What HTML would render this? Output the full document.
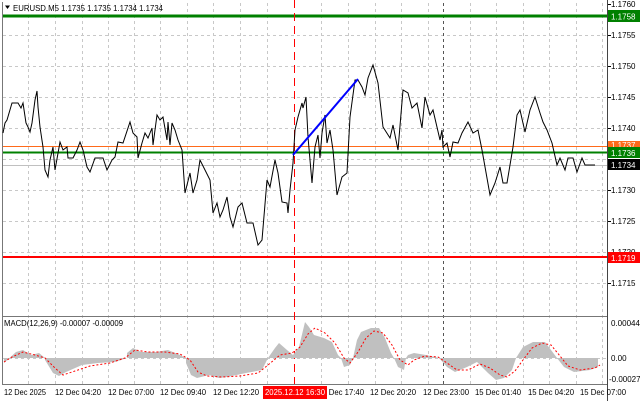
<!DOCTYPE html>
<html><head><meta charset="utf-8"><style>
body{margin:0;background:#fff;width:640px;height:401px;overflow:hidden}
svg{display:block}
text{font-family:"Liberation Sans",sans-serif;font-size:8px;fill:#000}
</style></head><body>
<svg width="640" height="401" viewBox="0 0 640 401">
<rect width="640" height="401" fill="#fff"/>
<g stroke="#c8c8c8" stroke-width="1" stroke-dasharray="3,3">
<path d="M3 35.5H607M3 66.5H607M3 97.5H607M3 128.5H607M3 159.5H607M3 190.5H607M3 221.5H607M3 252.5H607M3 283.5H607"/>
<path d="M28.5 3V384M55.5 3V384M82.5 3V384M108.5 3V384M134.5 3V384M160.5 3V384M187.5 3V384M213.5 3V384M240.5 3V384M267.5 3V384M321.5 3V384M348.5 3V384M375.5 3V384M401.5 3V384M428.5 3V384M470.5 3V384M496.5 3V384M523.5 3V384M549.5 3V384M576.5 3V384M602.5 3V384"/>
<path d="M3 358.5H607"/>
</g>
<path d="M443.5 3V384" stroke="#555" stroke-dasharray="3,3"/>
<path d="M2.5 2V384.5H607.5V2M2 316.5H608" stroke="#777" fill="none"/>
<path d="M607.5 0V401" stroke="#444"/>
<path d="M3 16H607" stroke="#008000" stroke-width="3"/>
<path d="M3 146.5H607" stroke="#ff6a1a" stroke-width="1"/>
<path d="M3 152.5H607" stroke="#008000" stroke-width="2"/>
<path d="M3 165.5H607" stroke="#c0c0c0" stroke-width="1"/>
<path d="M3 257H607" stroke="#ff0000" stroke-width="2"/>
<path d="M294.5 0V384" stroke="#ff0000" stroke-dasharray="8,5"/>
<polyline fill="none" stroke="#000" stroke-width="1" points="3,133 5,123 7,120 12,103 18,103 21,108 23,103 26,123 28,127 30,132 32,123 35,100 37,91 38,107 40,127 43,147 45,170 48,177 50,160 53,147 55,170 60,142 63,150 67,147 68,158 73,158 77,150 80,142 83,150 87,167 90,172 95,158 103,158 107,170 112,160 115,157 118,142 123,143 130,122 133,133 137,137 138,158 142,143 145,133 148,138 152,128 153,145 157,115 160,120 163,117 167,140 168,122 170,145 172,123 175,130 178,140 182,150 185,193 190,173 193,193 197,180 200,160 205,170 210,180 213,213 217,203 220,217 223,210 227,197 230,217 233,227 238,207 242,203 247,223 253,223 258,245 262,240 267,180 270,187 275,160 278,173 282,202 287,203 288,213 290,190 293,163 295,130 298,117 302,103 303,108 306,97 308,137 312,183 315,147 318,135 320,158 322,133 325,115 327,143 330,130 333,150 337,195 342,177 347,173 350,117 355,80 358,80 362,87 365,95 368,78 373,65 378,83 383,127 390,138 393,125 398,150 403,90 408,93 412,108 417,103 422,128 425,97 430,115 433,110 440,140 442,130 443,147 447,143 450,157 453,142 458,143 462,133 468,122 473,133 478,130 482,150 490,195 495,183 500,167 503,183 507,183 513,147 517,115 520,110 525,132 530,110 535,97 540,113 543,122 547,130 552,143 557,165 560,158 565,170 568,158 573,158 577,172 582,158 585,165 595,165"/>
<path d="M293 155L358 79" stroke="#0000ff" stroke-width="2"/>
<polygon fill="#c0c0c0" points="4,358 4,363 16,352 23,350 31,355 39,353 45,358 45,360 53,373 59,376 66,372 82,365 98,363 115,362 127,358 127,353 133,348 141,352 156,352 168,350 180,355 186,358 186,363 191,375 197,378 209,375 219,378 227,377 246,373 262,370 268,358 275,348 279,343 287,350 293,355 299,347 305,322 309,327 314,335 324,338 332,342 338,355 341,358 344,367 350,365 353,358 357,340 361,332 371,328 379,328 385,338 391,353 394,358 398,367 404,370 406,358 408,355 414,353 426,355 439,358 447,367 455,372 467,367 477,362 488,373 496,380 504,378 512,370 516,358 523,347 533,342 545,342 551,350 557,358 564,367 574,372 590,370 598,367 598,358"/>
<polyline fill="none" stroke="#ff0000" stroke-dasharray="2,2" points="4,362 12,357 23,352 35,355 45,358 55,368 63,375 75,371 90,366 110,363 125,358 135,350 148,352 165,352 180,354 190,360 198,372 207,376 222,377 240,376 258,373 268,365 280,355 292,353 300,347 308,334 315,328 325,333 335,343 344,358 350,363 358,352 366,338 374,331 383,333 392,345 400,360 408,365 414,360 425,356 438,357 447,363 457,370 468,370 480,364 490,368 500,375 507,377 515,371 523,360 532,348 542,343 551,345 560,356 568,366 580,370 595,368 600,365"/>
<path d="M5 5.5L10 5.5L7.5 9Z" fill="#000"/>
<text x="13" y="11" textLength="150" lengthAdjust="spacingAndGlyphs">EURUSD.M5  1.1735 1.1735 1.1734 1.1734</text>
<text x="4" y="326" textLength="119" lengthAdjust="spacingAndGlyphs">MACD(12,26,9) -0.00007 -0.00009</text>
<g>
<text x="611" y="7">1.1760</text>
<text x="611" y="38">1.1755</text>
<text x="611" y="69">1.1750</text>
<text x="611" y="100">1.1745</text>
<text x="611" y="131">1.1740</text>
<text x="611" y="193">1.1730</text>
<text x="611" y="224">1.1725</text>
<text x="611" y="255">1.1720</text>
<text x="611" y="286">1.1715</text>
<path d="M608 4.5H611M608 35.5H611M608 66.5H611M608 97.5H611M608 128.5H611M608 190.5H611M608 221.5H611M608 283.5H611" stroke="#000"/>
<rect x="608" y="10" width="32" height="12" fill="#008000"/><text x="611" y="19.5" style="fill:#fff">1.1758</text>
<rect x="608" y="141" width="32" height="7" fill="#ff6a1a"/><text x="611" y="148" style="fill:#fff">1.1737</text>
<rect x="608" y="147" width="32" height="11" fill="#008000"/><text x="611" y="156" style="fill:#fff">1.1736</text>
<rect x="608" y="159" width="32" height="11" fill="#000"/><text x="611" y="168" style="fill:#fff">1.1734</text>
<rect x="608" y="252" width="32" height="11" fill="#ff0000"/><text x="611" y="261" style="fill:#fff">1.1719</text>
<text x="611" y="326">0.00044</text>
<text x="611" y="361">0.00</text>
<text x="609" y="382">-0.00027</text>
</g>
<g>
<text x="4" y="395" textLength="42" lengthAdjust="spacingAndGlyphs">12 Dec 2025</text>
<text x="55" y="395" textLength="46" lengthAdjust="spacingAndGlyphs">12 Dec 04:20</text>
<text x="108" y="395" textLength="46" lengthAdjust="spacingAndGlyphs">12 Dec 07:00</text>
<text x="160" y="395" textLength="46" lengthAdjust="spacingAndGlyphs">12 Dec 09:40</text>
<text x="213" y="395" textLength="46" lengthAdjust="spacingAndGlyphs">12 Dec 12:20</text>
<text x="318" y="395" textLength="46" lengthAdjust="spacingAndGlyphs">12 Dec 17:40</text>
<text x="370" y="395" textLength="46" lengthAdjust="spacingAndGlyphs">12 Dec 20:20</text>
<text x="423" y="395" textLength="46" lengthAdjust="spacingAndGlyphs">12 Dec 23:00</text>
<text x="475" y="395" textLength="46" lengthAdjust="spacingAndGlyphs">15 Dec 01:40</text>
<text x="528" y="395" textLength="46" lengthAdjust="spacingAndGlyphs">15 Dec 04:20</text>
<text x="580" y="395" textLength="46" lengthAdjust="spacingAndGlyphs">15 Dec 07:00</text>
<rect x="263" y="386" width="64" height="13" fill="#ff0000"/>
<text x="265" y="395" textLength="60" lengthAdjust="spacingAndGlyphs" style="fill:#fff">2025.12.12 16:30</text>
</g>
</svg>
</body></html>
